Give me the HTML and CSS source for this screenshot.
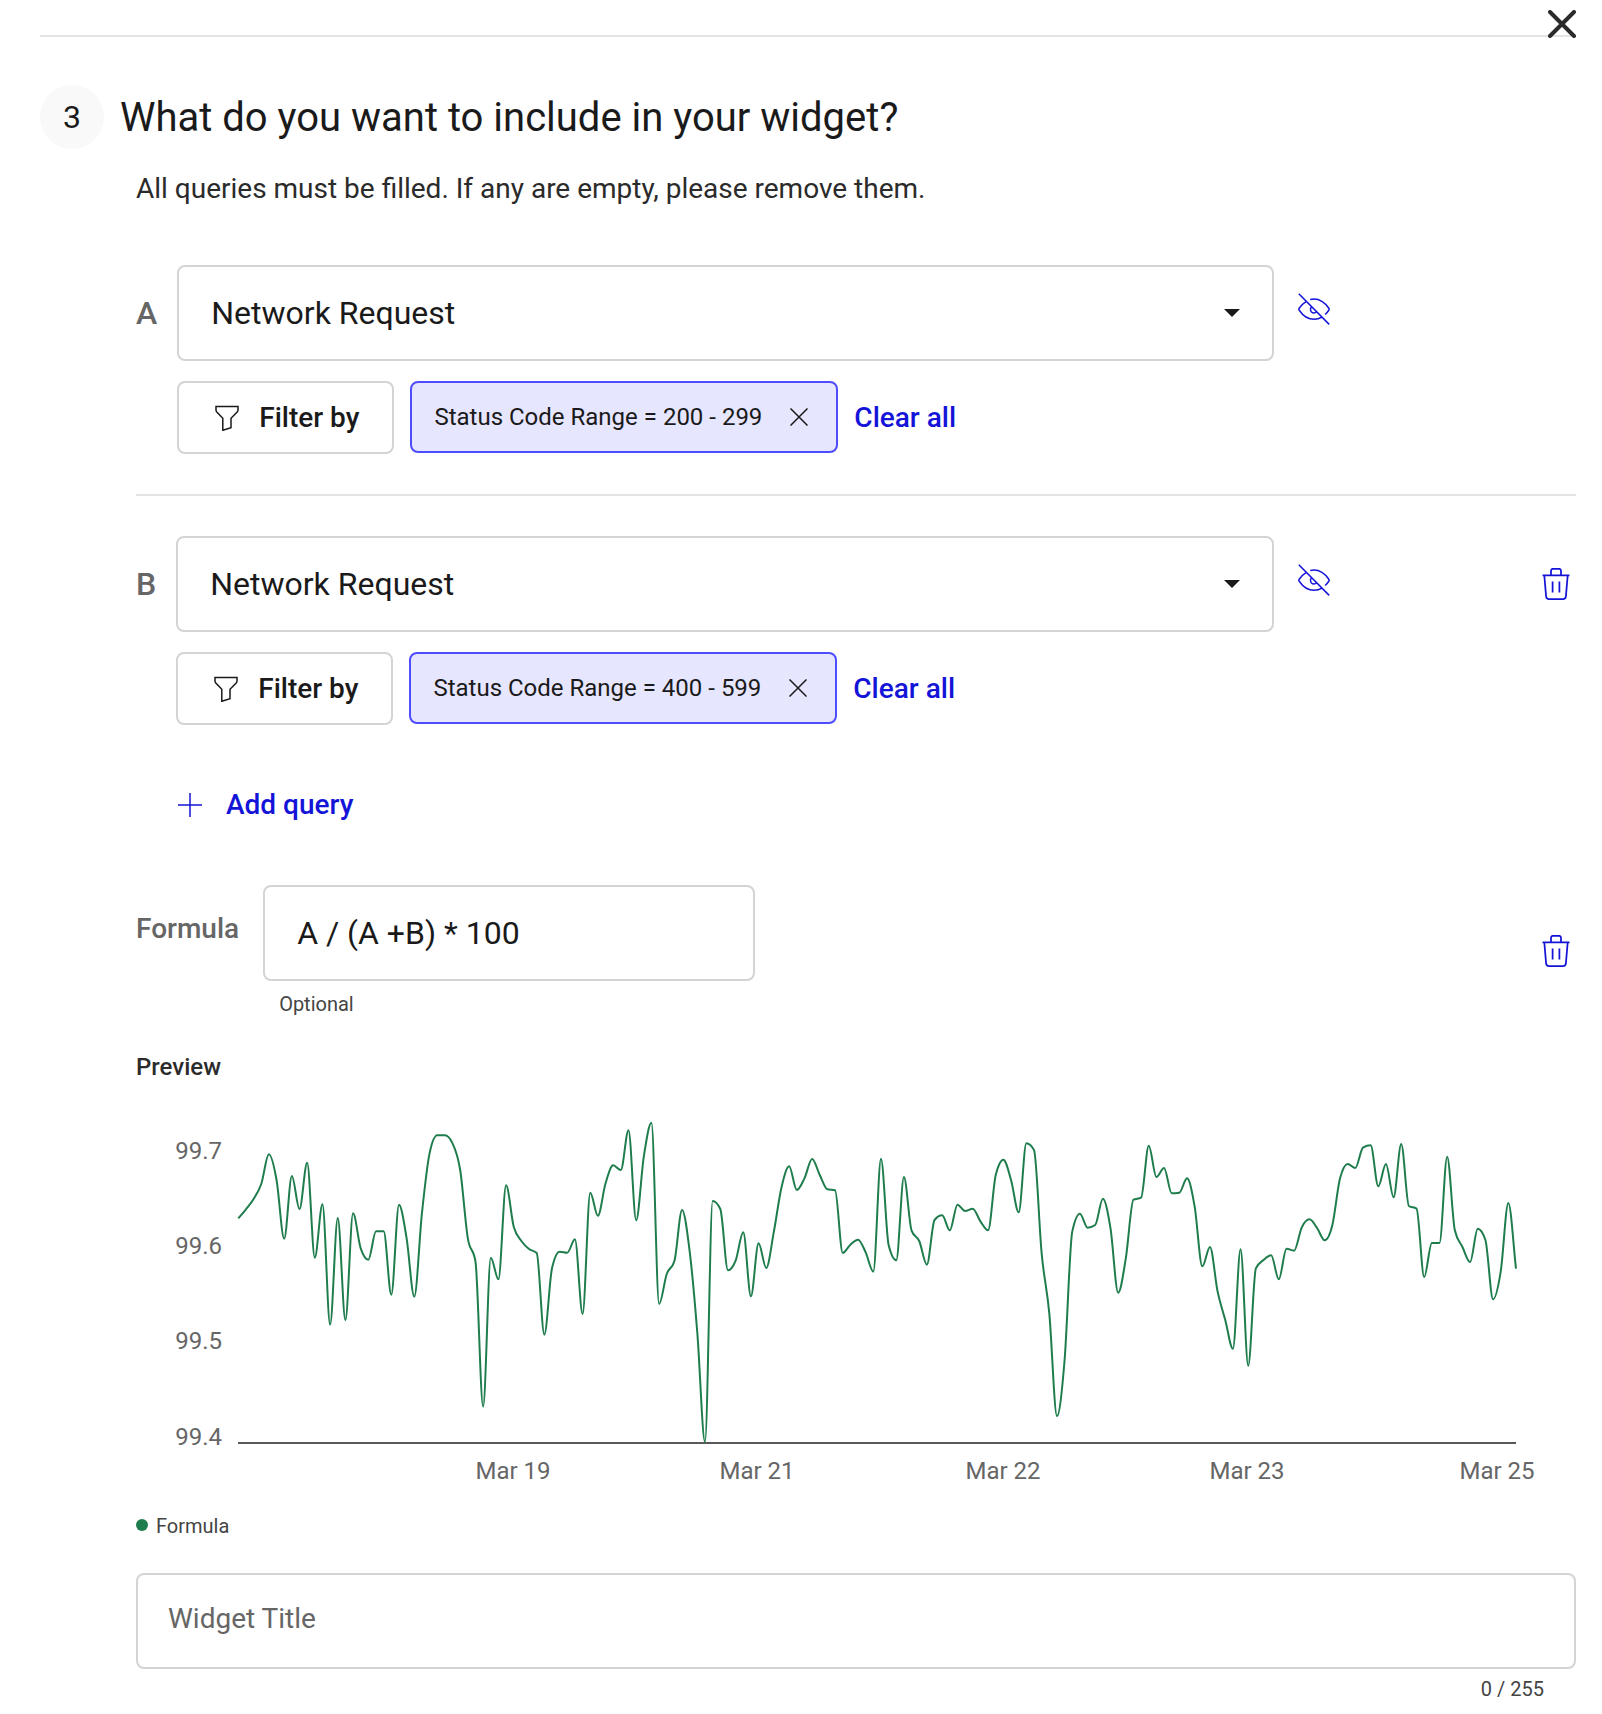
FILE: index.html
```html
<!DOCTYPE html>
<html lang="en">
<head>
<meta charset="utf-8">
<meta name="viewport" content="width=device-width, initial-scale=1">
<title>Widget builder</title>
<link rel="stylesheet" href="styles.css">
</head>
<body>
<svg class="sprite" aria-hidden="true">
  <symbol id="i-filter" viewBox="0 0 24 26"><path d="M1 1.5h22v3.6c0 .8-.3 1.3-.8 1.9L16 13.2v9.6l-8.200 2.500V13.200L1.800 7C1.300 6.400 1 5.900 1 5.100z"/></symbol>
  <symbol id="i-x" viewBox="0 0 18 18"><path d="M.5.5l17 17M17.500.5l-17 17"/></symbol>
  <symbol id="i-eye" viewBox="0 0 32 32"><path d="M.8.8l30.400 30.600M8.300 8.300C5.200 10.200 3 12.800 1.200 15.200c-.5.700-.5 1.300 0 2C4.700 22.300 9.700 26.300 16 26.300c3 0 5.700-.8 8-2.200M12.200 6.500c1.200-.3 2.500-.5 3.800-.5 6.300 0 11.300 4.200 14.800 9.200.5.700.5 1.300 0 2-1.100 1.600-2.300 3-3.600 4.300M13.500 13.700c-.8.800-1 1.700-1 2.600 0 2 1.500 3.700 3.500 3.700 1 0 2-.5 2.600-1.200"/></symbol>
  <symbol id="i-trash" viewBox="0 0 28 32"><path d="M.5 7.300h27M9 7.300V2.800C9 1.600 9.700.8 10.900.8h6.200c1.200 0 1.900.8 1.900 2v4.500M2.300 7.300l1.800 21c.2 1.800 1.200 2.700 2.900 2.700h14c1.700 0 2.700-.9 2.900-2.700l1.800-21M10.600 13.600v11M17.400 13.600v11"/></symbol>
</svg>

<main class="builder">
  <button class="close" type="button" aria-label="Close">
    <svg viewBox="0 0 28 28" aria-hidden="true"><path d="M2 2l24 24M26 2L2 26"/></svg>
  </button>

  <header class="step">
    <span class="step-number">3</span>
    <h1>What do you want to include in your widget?</h1>
  </header>

  <form class="content">
    <p class="hint">All queries must be filled. If any are empty, please remove them.</p>

    <section class="query">
      <label class="query-name" for="query-a">A</label>
      <div class="query-main">
        <div class="select-box">
          <select id="query-a"><option>Network Request</option></select>
        </div>
        <div class="filters">
          <button class="filter-button" type="button"><svg class="icon-filter" aria-hidden="true"><use href="#i-filter"/></svg>Filter by</button>
          <button class="chip" type="button">Status Code Range = 200 - 299<svg class="icon-x" aria-hidden="true"><use href="#i-x"/></svg></button>
          <button class="link" type="button">Clear all</button>
        </div>
      </div>
      <div class="actions">
        <button class="icon-button toggle" type="button" aria-label="Hide query A"><svg class="icon-eye" aria-hidden="true"><use href="#i-eye"/></svg></button>
      </div>
    </section>

    <section class="query">
      <label class="query-name" for="query-b">B</label>
      <div class="query-main">
        <div class="select-box">
          <select id="query-b"><option>Network Request</option></select>
        </div>
        <div class="filters">
          <button class="filter-button" type="button"><svg class="icon-filter" aria-hidden="true"><use href="#i-filter"/></svg>Filter by</button>
          <button class="chip" type="button">Status Code Range = 400 - 599<svg class="icon-x" aria-hidden="true"><use href="#i-x"/></svg></button>
          <button class="link" type="button">Clear all</button>
        </div>
      </div>
      <div class="actions">
        <button class="icon-button toggle" type="button" aria-label="Hide query B"><svg class="icon-eye" aria-hidden="true"><use href="#i-eye"/></svg></button>
        <button class="icon-button" type="button" aria-label="Delete query B"><svg class="icon-trash" aria-hidden="true"><use href="#i-trash"/></svg></button>
      </div>
    </section>

    <button class="link add" type="button">
      <svg viewBox="0 0 24 24" aria-hidden="true"><path d="M12 0v24M0 12h24"/></svg>Add query
    </button>

    <section class="formula">
      <label for="formula">Formula</label>
      <div class="formula-field">
        <input class="box" id="formula" type="text" value="A / (A +B) * 100">
        <span class="small helper">Optional</span>
      </div>
      <button class="icon-button" type="button" aria-label="Delete formula"><svg class="icon-trash" aria-hidden="true"><use href="#i-trash"/></svg></button>
    </section>

    <h2>Preview</h2>
    <svg class="chart" viewBox="0 0 1440 420" role="img" aria-label="Formula over time">
      <g class="ticks-y">
        <text x="86" y="76">99.7</text>
        <text x="86" y="171">99.6</text>
        <text x="86" y="266">99.5</text>
        <text x="86" y="362">99.4</text>
      </g>
      <g class="ticks-x">
        <text x="377" y="396">Mar 19</text>
        <text x="621" y="396">Mar 21</text>
        <text x="867" y="396">Mar 22</text>
        <text x="1111" y="396">Mar 23</text>
        <text x="1361" y="396">Mar 25</text>
      </g>
      <path class="axis" d="M102 360H1380"/>
      <path class="series" id="series"/>
    </svg>
    <div class="small legend"><span class="dot"></span>Formula</div>

    <input class="box title-field" type="text" placeholder="Widget Title" aria-label="Widget Title" maxlength="255">
    <div class="small counter">0 / 255</div>
  </form>
</main>
<script src="chart.js"></script>
</body>
</html>
```
FILE: chart.js
```js
// Hourly samples, as depth below the top of the plot (three units to one chart unit).
const samples = [
  355, 328, 297, 252, 163, 240, 416, 228, 327, 188, 473, 313, 674, 354, 660, 340,
  445, 479, 394, 394, 584, 314, 415, 590, 340, 160, 106, 106, 130, 210, 415, 485,
  920, 473, 538, 256, 380, 423, 447, 459, 704, 505, 455, 458, 418, 642, 278, 347,
  250, 196, 210, 91, 361, 170, 68, 612, 522, 483, 330, 455, 700, 1026, 303, 327,
  511, 482, 397, 589, 430, 504, 395, 262, 199, 270, 235, 177, 225, 268, 271, 459,
  434, 419, 457, 515, 176, 435, 481, 231, 392, 423, 494, 360, 346, 391, 314, 333,
  326, 364, 391, 225, 179, 240, 337, 130, 150, 460, 640, 948, 780, 395, 341, 383,
  375, 296, 385, 578, 475, 299, 293, 137, 231, 204, 280, 278, 235, 320, 499, 441,
  575, 660, 746, 448, 797, 505, 480, 466, 538, 446, 452, 382, 358, 384, 421, 375,
  235, 192, 204, 143, 136, 259, 192, 292, 132, 318, 326, 531, 429, 429, 170, 390,
  441, 486, 386, 420, 598, 515, 309, 506
];

const left = 102.3;
const step = 1277.7 / (samples.length - 1);
const ys = samples.map(v => 17 + v / 3);
const slopes = ys.slice(1).map((y, i) => (y - ys[i]) / step);

// Monotone cubic tangents: flat at every local extreme, so the curve never overshoots.
const tangents = ys.map((_, i) => {
  if (i === 0) return slopes[0];
  if (i === ys.length - 1) return slopes[i - 1];
  const a = slopes[i - 1];
  const b = slopes[i];
  if (a * b <= 0) return 0;
  return Math.sign(a) * 2 * Math.min(Math.abs(a), Math.abs(b), Math.abs(a + b) / 4);
});

let d = `M${left},${ys[0]}`;
for (let i = 1; i < ys.length; i++) {
  const x0 = left + (i - 1) * step;
  const x1 = left + i * step;
  const t = step / 3;
  d += `C${x0 + t},${ys[i - 1] + tangents[i - 1] * t} ${x1 - t},${ys[i] - tangents[i] * t} ${x1},${ys[i]}`;
}
document.getElementById('series').setAttribute('d', d);
```
FILE: styles.css
```css
* {
  box-sizing: border-box;
}

body {
  margin: 0;
  background: #fff;
  color: #1a1a1a;
  font-family: Roboto, "Liberation Sans", sans-serif;
}

button,
input,
select {
  margin: 0;
  padding: 0;
  border: 0;
  background: none;
  color: inherit;
  font: inherit;
}

button {
  cursor: pointer;
}

svg {
  display: block;
  flex: none;
  fill: none;
  stroke: currentColor;
}

.sprite {
  position: absolute;
  width: 0;
  height: 0;
}

.builder {
  position: relative;
  padding: 35px 26px 12px 40px;
}

.close {
  position: absolute;
  top: 10px;
  right: 26px;
  color: #2b2b2b;
}

.close svg {
  width: 28px;
  height: 28px;
  stroke-width: 4;
  stroke-linecap: round;
}

.step {
  display: flex;
  align-items: center;
  gap: 16px;
  padding-top: 48px;
  border-top: 2px solid #e4e4e4;
}

.step-number {
  flex: none;
  width: 64px;
  border-radius: 50%;
  background: #f9f9f9;
  font-size: 32px;
  line-height: 64px;
  text-align: center;
}

h1 {
  margin: 0;
  padding-top: 2px;
  font-size: 40px;
  font-weight: 400;
  line-height: 60px;
}

.content {
  padding-left: 96px;
}

.hint {
  margin: 20px 0 56px;
  color: #2b2b2b;
  font-size: 28px;
  line-height: 40px;
}

.query {
  display: flex;
}

.query + .query {
  margin-top: 40px;
  padding-top: 40px;
  border-top: 2px solid #e4e4e4;
}

.query-name {
  flex: none;
  margin-right: 20px;
  color: #666;
  font-size: 32px;
  font-weight: 500;
  line-height: 96px;
}

.query-main {
  flex: 1;
}

.select-box {
  position: relative;
}

.select-box::after {
  content: "";
  position: absolute;
  top: 44px;
  right: 34px;
  border: 8px solid transparent;
  border-top-color: #1a1a1a;
  border-bottom: 0;
  pointer-events: none;
}

select,
.box {
  display: block;
  width: 100%;
  height: 96px;
  padding: 0 32px;
  border: 2px solid #d4d4d4;
  border-radius: 8px;
  appearance: none;
  font-size: 32px;
}

.filters {
  display: flex;
  align-items: center;
  gap: 16px;
  margin-top: 20px;
}

.filter-button,
.chip {
  display: flex;
  align-items: center;
  height: 73px;
  border: 2px solid #d4d4d4;
  border-radius: 8px;
}

.filter-button {
  gap: 20px;
  padding: 0 33px 0 36px;
  font-size: 28px;
  font-weight: 500;
}

.chip {
  align-self: flex-start;
  gap: 28px;
  height: 72px;
  padding: 0 28px 0 22px;
  border-color: #4d4dff;
  background: #e6e6ff;
  font-size: 24px;
}

.icon-filter {
  width: 24px;
  height: 26px;
  stroke-width: 1.5;
}

.icon-x {
  width: 18px;
  height: 18px;
  stroke-width: 1.5;
}

.link {
  color: #1414d8;
  font-size: 28px;
  font-weight: 500;
  line-height: 40px;
}

.actions {
  display: flex;
  flex: none;
  align-items: flex-start;
  justify-content: space-between;
  width: 302px;
  padding: 28px 6px 0 24px;
}

.icon-button {
  color: #1414d8;
}

.icon-eye {
  width: 32px;
  height: 32px;
  stroke-width: 1.5;
}

.icon-trash {
  width: 28px;
  height: 32px;
  stroke-width: 1.75;
}

.toggle + .icon-button {
  padding-top: 4px;
}

.add {
  display: flex;
  align-items: center;
  gap: 24px;
  margin: 60px 0 60px 42px;
}

.add svg {
  width: 24px;
  height: 24px;
  stroke-width: 1.5;
}

.formula {
  display: flex;
  align-items: flex-start;
}

.formula label {
  margin-right: 24px;
  color: #666;
  font-size: 28px;
  font-weight: 500;
  line-height: 88px;
}

.formula-field {
  flex: 0 1 492px;
}

.formula .icon-button {
  align-self: center;
  margin-left: auto;
  padding-right: 6px;
}

.small {
  color: #444;
  font-size: 20px;
  line-height: 24px;
}

.helper {
  display: block;
  margin: 11px 16px 0;
}

h2 {
  margin: 35px 0 0;
  color: #2b2b2b;
  font-size: 24px;
  font-weight: 500;
  line-height: 32px;
}

.chart {
  width: 100%;
  height: auto;
}

.chart text {
  fill: #666;
  stroke: none;
  font-size: 24px;
}

.ticks-y {
  text-anchor: end;
}

.ticks-x {
  text-anchor: middle;
}

.axis {
  stroke: #595959;
  stroke-width: 2;
}

.series {
  stroke: #1f7d4d;
  stroke-width: 2;
}

.legend {
  display: flex;
  align-items: center;
  gap: 8px;
  margin: 11px 0 35px;
}

.dot {
  width: 12px;
  height: 12px;
  margin-bottom: 2px;
  border-radius: 50%;
  background: #1f7d4d;
}

.title-field {
  padding: 0 30px 6px;
  font-size: 28px;
}

.title-field::placeholder {
  color: #666;
}

.counter {
  margin: 8px 32px 0;
  text-align: right;
}
```
